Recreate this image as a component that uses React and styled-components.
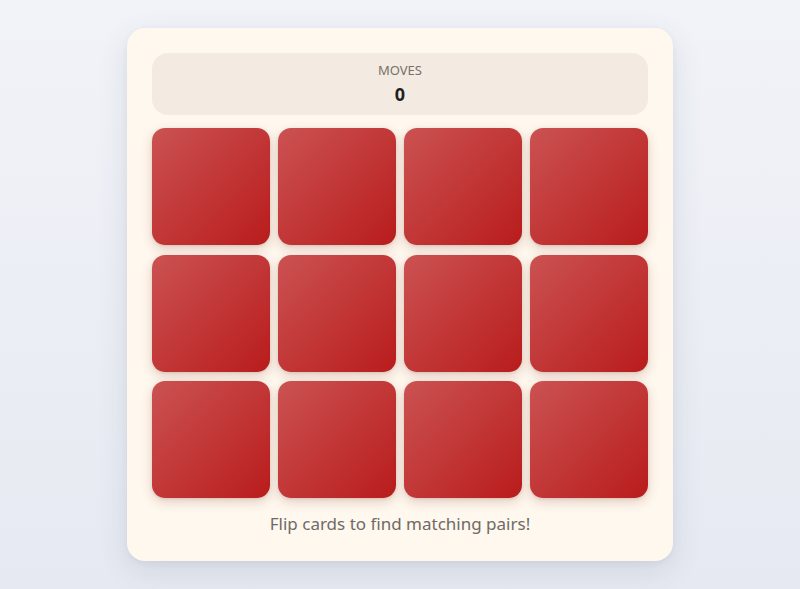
import styled, { createGlobalStyle } from 'styled-components';

const GlobalStyle = createGlobalStyle`
  * {
    box-sizing: border-box;
  }

  body {
    margin: 0;
    font-family: 'Segoe UI', 'Noto Sans', 'Open Sans', sans-serif;
    background: linear-gradient(180deg, #f1f3f8 0%, #e6e9f1 100%);
  }
`;

const CARD_COUNT = 12;

function App() {
  const cards = Array.from({ length: CARD_COUNT }, (_, i) => i);

  return (
    <>
      <GlobalStyle />
      <Page>
        <Board>
          <Stats>
            <StatLabel>Moves</StatLabel>
            <StatValue>0</StatValue>
          </Stats>

          <Grid>
            {cards.map((id) => (
              <CardBack key={id} />
            ))}
          </Grid>

          <Hint>Flip cards to find matching pairs!</Hint>
        </Board>
      </Page>
    </>
  );
}

const Page = styled.div`
  min-height: 100vh;
  display: flex;
  justify-content: center;
  align-items: center;
`;

const Board = styled.div`
  width: 546px;
  padding: 25px;
  border-radius: 18px;
  background-color: #fff8ee;
  box-shadow: 0 10px 30px rgba(60, 70, 100, 0.12), 0 2px 6px rgba(60, 70, 100, 0.06);
`;

const Stats = styled.div`
  display: flex;
  flex-direction: column;
  align-items: center;
  gap: 4px;
  height: 62px;
  padding: 9px 0;
  border-radius: 16px;
  background-color: #f3ebe1;
`;

const StatLabel = styled.span`
  font-size: 13px;
  line-height: 17px;
  text-transform: uppercase;
  color: #777069;
`;

const StatValue = styled.strong`
  font-size: 18px;
  line-height: 23px;
  font-weight: 700;
  color: #231f1c;
`;

const Grid = styled.div`
  display: grid;
  grid-template-columns: repeat(4, 1fr);
  grid-auto-rows: 117px;
  gap: 9.5px 8px;
  margin-top: 13px;
`;

const CardBack = styled.div`
  border-radius: 13px;
  background: linear-gradient(135deg, #cb5252 0%, #b91c1c 100%);
  box-shadow: 0 4px 12px rgba(120, 40, 30, 0.2), 0 1px 3px rgba(0, 0, 0, 0.1);
`;

const Hint = styled.p`
  margin: 13px 0 0;
  font-size: 17px;
  line-height: 25px;
  text-align: center;
  color: #6f6a66;
`;

export default App;
